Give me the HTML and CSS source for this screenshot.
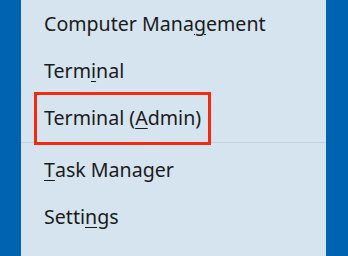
FILE: index.html
```html
<!DOCTYPE html>
<html lang="en">
<head>
    <meta charset="UTF-8">
    <meta name="viewport" content="width=device-width, initial-scale=1.0">
    <title>Quick Link Menu</title>
    <link rel="stylesheet" href="styles.css">
</head>
<body>
    <div class="desktop">
        <ul class="menu">
            <li class="menu-item">Computer Mana<u>g</u>ement</li>
            <li class="menu-item">Term<u>i</u>nal</li>
            <li class="menu-item"><span class="callout">Terminal (<u>A</u>dmin)</span></li>
            <li class="separator"></li>
            <li class="menu-item"><u>T</u>ask Manager</li>
            <li class="menu-item">Setti<u>n</u>gs</li>
            <li class="menu-item">File <u>E</u>xplorer</li>
        </ul>
    </div>
</body>
</html>
```

FILE: styles.css
```css
* {
    margin: 0;
    padding: 0;
    box-sizing: border-box;
}

body {
    background-color: #0063b1;
    font-family: "Noto Sans", "Open Sans", sans-serif;
    overflow: hidden;
}

.desktop {
    height: 256px;
    padding: 0 22px 0 21px;
}

.menu {
    list-style: none;
    height: 100%;
    background-color: #d5e4ef;
    overflow: hidden;
}

.menu-item {
    height: 47px;
    padding-left: 23px;
    display: flex;
    align-items: center;
    font-size: 19.6px;
    color: #1b1b1b;
}

.menu-item u {
    text-decoration-thickness: 1px;
    text-underline-offset: 3px;
}

.separator {
    height: 1px;
    margin: 1px 0 3px;
    background-color: #c3d3df;
}

.callout {
    position: relative;
}

/* red annotation box drawn over the menu */
.callout::after {
    content: "";
    position: absolute;
    top: -12px;
    bottom: -14px;
    left: -10px;
    right: -10px;
    border: 3px solid #f42a0e;
}
```
